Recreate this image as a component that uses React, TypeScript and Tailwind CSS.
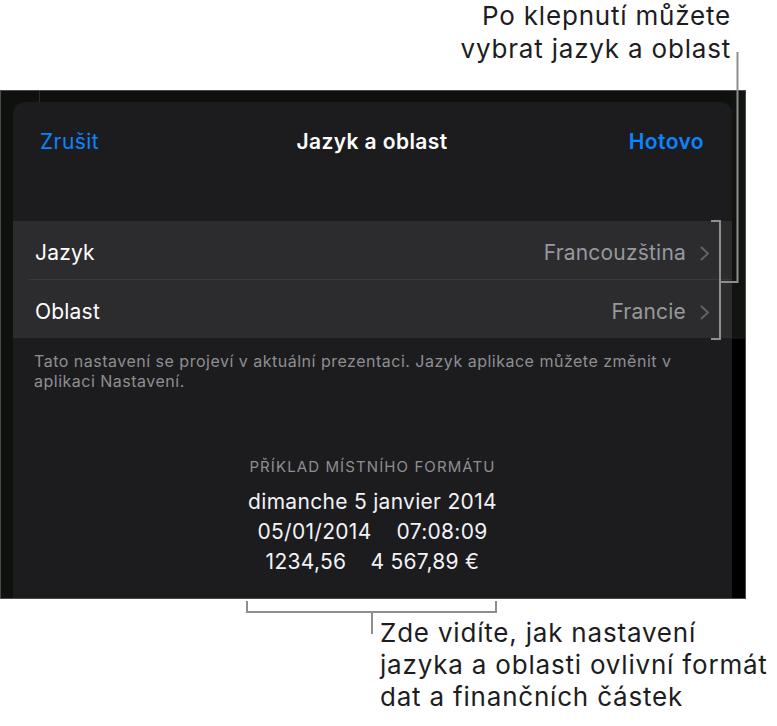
import React from 'react'

function Chevron() {
  return (
    <svg width="10" height="15" viewBox="0 0 10 15" fill="none">
      <path d="M1.5 1.5 L8 7.5 L1.5 13.5" stroke="#636366" strokeWidth="2" strokeLinecap="round" strokeLinejoin="round" />
    </svg>
  )
}

function Row({ label, value, last }: { label: string; value: string; last?: boolean }) {
  return (
    <div className="ml-[16px]">
      <div className={`flex items-center justify-between pt-[6px] pl-[6px] pr-[22px] ${last ? 'h-[58px]' : 'h-[59px] border-b border-[#3a3a3c]'}`}>
        <span className="text-[21px] tracking-[0.2px] text-white">{label}</span>
        <span className="flex items-center gap-[14px]">
          <span className="text-[21px] tracking-[0.2px] text-[#98989e]">{value}</span>
          <Chevron />
        </span>
      </div>
    </div>
  )
}

export default function App() {
  return (
    <div className="relative w-[777px] h-[726px] bg-white overflow-hidden font-['Inter','Liberation_Sans',sans-serif]">
      {/* callout above */}
      <div className="h-[91px] pr-[46px] text-right text-[26px] leading-[33px] tracking-[0.8px] text-[#1d1d1f]">
        <div className="-mt-[1px]">
          Po klepnutí můžete
          <br />
          vybrat jazyk a oblast
        </div>
      </div>

      {/* screenshot */}
      <div className="flex w-[746px] h-[509px] border border-[#4a4a4a] bg-[#0e110d]">
        <div className="w-[12px]" />
        <div className="flex flex-col w-[719px]">
          <div className="h-[11px] pl-[26px]">
            <div className="w-px h-full bg-[#2c302c]" />
          </div>
          <div className="flex-1 flex flex-col rounded-t-[12px] bg-[#1c1c1e]">
            <div className="grid grid-cols-[1fr_auto_1fr] items-center h-[76px] pt-[4px] pl-[27px] pr-[28px]">
              <span className="text-[21px] tracking-[0.4px] text-[#0a84ff]">Zrušit</span>
              <span className="text-[21px] tracking-[0.4px] font-semibold text-white">Jazyk a oblast</span>
              <span className="text-[21px] tracking-[0.4px] font-semibold text-[#0a84ff] text-right">Hotovo</span>
            </div>
            <div className="mt-[43px] bg-[#2c2c2e]">
              <Row label="Jazyk" value="Francouzština" />
              <Row label="Oblast" value="Francie" last />
            </div>
            <p className="mt-[13px] pl-[21px] pr-[10px] text-[16px] leading-[20px] tracking-[0.5px] text-[#8e8e93]">
              Tato nastavení se projeví v aktuální prezentaci. Jazyk aplikace můžete změnit v
              <br />
              aplikaci Nastavení.
            </p>
            <div className="mt-[66px] text-center text-[15px] leading-[20px] tracking-[1.1px] text-[#8e8e93]">
              PŘÍKLAD MÍSTNÍHO FORMÁTU
            </div>
            <div className="mt-[10px] flex flex-col items-center text-[21px] leading-[30px] tracking-[0.3px] text-[#f2f2f7]">
              <span>dimanche 5 janvier 2014</span>
              <span className="flex gap-[25px]">
                <span>05/01/2014</span>
                <span>07:08:09</span>
              </span>
              <span className="flex gap-[24px]">
                <span>1234,56</span>
                <span>4 567,89 €</span>
              </span>
            </div>
          </div>
        </div>
        <div className="flex-1 flex flex-col">
          <div className="h-[248px] bg-[#111411]" />
          <div className="flex-1 bg-black" />
        </div>
      </div>

      {/* callout below */}
      <div className="mt-[18px] pl-[380px] text-[26px] leading-[32px] tracking-[0.8px] text-[#1d1d1f]">
        Zde vidíte, jak nastavení
        <br />
        jazyka a oblasti ovlivní formát
        <br />
        dat a finančních částek
      </div>

      {/* leader lines */}
      <svg className="absolute inset-0 pointer-events-none" width="777" height="726" fill="none">
        <path d="M737.5 52 V282 H721" stroke="#8e8e8e" strokeWidth="2" />
        <path d="M711 221 H720 V339 H711" stroke="#8e8e8e" strokeWidth="2" />
        <path d="M247 601 V612 H496 V601" stroke="#8e8e8e" strokeWidth="2" />
        <path d="M372 612 V634" stroke="#8e8e8e" strokeWidth="2" />
      </svg>
    </div>
  )
}
